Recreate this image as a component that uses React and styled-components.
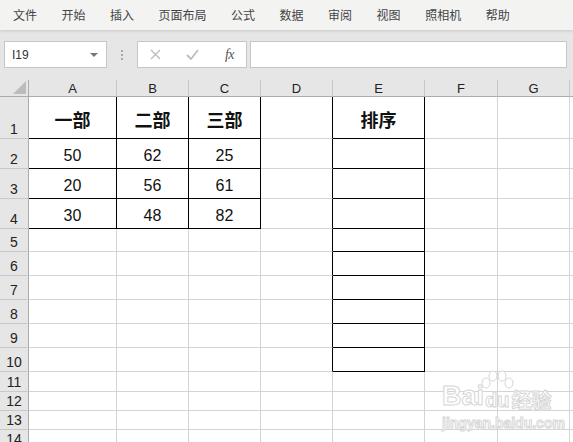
import React from 'react';
import styled, { createGlobalStyle } from 'styled-components';

const GlobalStyle = createGlobalStyle`
  html, body {
    margin: 0;
    padding: 0;
    overflow: hidden;
  }
  body {
    font-family: "Noto Sans CJK SC", "Liberation Sans", sans-serif;
  }
`;

const menus = ['文件', '开始', '插入', '页面布局', '公式', '数据', '审阅', '视图', '照相机', '帮助'];
const columns = [
  { name: 'A', width: 88 },
  { name: 'B', width: 72 },
  { name: 'C', width: 72 },
  { name: 'D', width: 72 },
  { name: 'E', width: 92 },
  { name: 'F', width: 73 },
  { name: 'G', width: 72 },
  { name: '', width: 40 },
];
const rowHeights = [42, 30, 30, 30, 23, 24, 24, 24, 24, 24, 20, 19, 19, 19];

const data = {
  '1-0': { text: '一部', bold: true },
  '1-1': { text: '二部', bold: true },
  '1-2': { text: '三部', bold: true },
  '1-4': { text: '排序', bold: true },
  '2-0': { text: '50' },
  '2-1': { text: '62' },
  '2-2': { text: '25' },
  '3-0': { text: '20' },
  '3-1': { text: '56' },
  '3-2': { text: '61' },
  '4-0': { text: '30' },
  '4-1': { text: '48' },
  '4-2': { text: '82' },
};

const isBoxed = (row, col) => (row >= 1 && row <= 4 && col <= 2) || (col === 4 && row >= 1 && row <= 10);

const Page = styled.div`
  position: relative;
  width: 573px;
  height: 442px;
  background: #e6e6e6;
  display: flex;
  flex-direction: column;
  overflow: hidden;
`;

const MenuBar = styled.div`
  height: 30px;
  flex: none;
  display: flex;
  align-items: center;
  gap: 24.5px;
  padding-left: 13px;
  background: #f3f3f2;
  box-shadow: 0 1px 3px rgba(0, 0, 0, 0.13);
  position: relative;
  z-index: 1;
`;

const MenuItem = styled.span`
  font-size: 12px;
  color: #444;
  line-height: 1;
`;

const FormulaRow = styled.div`
  height: 50px;
  flex: none;
  display: flex;
  align-items: flex-start;
  padding: 11px 0 0 4px;
  box-sizing: border-box;
`;

const Box = styled.div`
  height: 27px;
  box-sizing: border-box;
  background: #fff;
  border: 1px solid #c6c6c6;
  display: flex;
  align-items: center;
`;

const NameBox = styled(Box)`
  width: 103px;
  padding: 0 8px 0 7px;
  justify-content: space-between;
  font-family: "Liberation Sans", sans-serif;
  font-size: 12px;
  color: #333;
`;

const DropArrow = styled.span`
  width: 0;
  height: 0;
  border-left: 4px solid transparent;
  border-right: 4px solid transparent;
  border-top: 4px solid #777;
`;

const Dots = styled.div`
  width: 30px;
  height: 27px;
  display: flex;
  flex-direction: column;
  align-items: center;
  justify-content: center;
  gap: 2px;

  span {
    width: 2px;
    height: 2px;
    background: #a8a8a8;
  }
`;

const FxBox = styled(Box)`
  width: 110px;
  padding: 0 12px 0 12px;
  justify-content: space-between;
`;

const Fx = styled.span`
  font-family: "Liberation Serif", serif;
  font-style: italic;
  font-size: 14px;
  color: #555;
  letter-spacing: -0.5px;
`;

const Input = styled(Box)`
  width: 317px;
  margin-left: 3px;
`;

const Sheet = styled.div`
  flex: 1;
  display: grid;
  grid-template-columns: 29px ${columns.map((c) => c.width + 'px').join(' ')};
  grid-template-rows: 17px ${rowHeights.map((h) => h + 'px').join(' ')};
  background: #fff;
  font-family: "Liberation Sans", sans-serif;
`;

const Corner = styled.div`
  background: #e6e6e6;
  border-right: 1px solid #ababab;
  border-bottom: 1px solid #ababab;
  box-sizing: border-box;
  display: flex;
  align-items: flex-end;
  justify-content: flex-end;
  padding: 0 2px 2px 0;
`;

const ColHeader = styled.div`
  background: #e6e6e6;
  box-sizing: border-box;
  border-bottom: 1px solid #ababab;
  border-right: 1px solid #c8c8c8;
  display: flex;
  align-items: center;
  justify-content: center;
  font-size: 13px;
  color: #222;
  padding-top: 1px;
`;

const RowHeader = styled.div`
  background: #e6e6e6;
  box-sizing: border-box;
  border-right: 1px solid #ababab;
  border-bottom: 1px solid #c8c8c8;
  display: flex;
  align-items: flex-end;
  justify-content: center;
  font-size: 14px;
  line-height: 1;
  color: #222;
  padding-bottom: 2px;
`;

const Cell = styled.div`
  box-sizing: border-box;
  border-right: 1px solid ${(p) => (p.$darkRight ? '#000' : '#d4d4d4')};
  border-bottom: 1px solid ${(p) => (p.$darkBottom ? '#000' : '#d4d4d4')};
  display: flex;
  align-items: flex-end;
  justify-content: center;
  padding-bottom: ${(p) => (p.$bold ? '10px' : '4px')};
  font-family: ${(p) => (p.$bold ? '"Noto Sans CJK SC", sans-serif' : '"Liberation Sans", sans-serif')};
  font-size: ${(p) => (p.$bold ? '18px' : '16px')};
  font-weight: ${(p) => (p.$bold ? 700 : 400)};
  line-height: 1;
  color: #111;
`;

const Watermark = styled.div`
  position: absolute;
  left: 442px;
  top: 383px;
  display: flex;
  flex-direction: column;
  align-items: flex-start;
  color: #fff;
  -webkit-text-stroke: 1px #d6d6d6;
  pointer-events: none;
`;

const MarkRow = styled.div`
  display: flex;
  align-items: flex-end;
  font-family: "Liberation Sans", sans-serif;
  font-weight: 700;
  font-size: 27px;
  line-height: 1;
`;

const MarkDu = styled.span`
  font-size: 20px;
  margin-left: 1px;
`;

const MarkCn = styled.span`
  font-family: "Noto Sans CJK SC", sans-serif;
  font-size: 20px;
  margin-left: 2px;
`;

const MarkUrl = styled.div`
  font-family: "Liberation Sans", sans-serif;
  font-weight: 700;
  font-size: 14px;
  margin-top: 5px;
`;

const Paw = styled.svg`
  position: absolute;
  left: 38px;
  top: -13px;
`;

export default function App() {
  return (
    <>
      <GlobalStyle />
      <Page>
        <MenuBar>
          {menus.map((m) => (
            <MenuItem key={m}>{m}</MenuItem>
          ))}
        </MenuBar>
        <FormulaRow>
          <NameBox>
            <span>I19</span>
            <DropArrow />
          </NameBox>
          <Dots>
            <span />
            <span />
            <span />
          </Dots>
          <FxBox>
            <svg width="11" height="11" viewBox="0 0 11 11">
              <path d="M1 1 L10 10 M10 1 L1 10" stroke="#bdbdbd" strokeWidth="1.4" fill="none" />
            </svg>
            <svg width="13" height="11" viewBox="0 0 13 11">
              <path d="M1 6 L5 10 L12 1" stroke="#bdbdbd" strokeWidth="1.8" fill="none" />
            </svg>
            <Fx>fx</Fx>
          </FxBox>
          <Input />
        </FormulaRow>
        <Sheet>
          <Corner>
            <svg width="13" height="13" viewBox="0 0 13 13">
              <path d="M13 0 L13 13 L0 13 Z" fill="#bcbcbc" />
            </svg>
          </Corner>
          {columns.map((c, i) => (
            <ColHeader key={i}>{c.name}</ColHeader>
          ))}
          {rowHeights.map((h, r) => {
            const row = r + 1;
            return (
              <React.Fragment key={row}>
                <RowHeader>{row}</RowHeader>
                {columns.map((c, col) => {
                  const cell = data[`${row}-${col}`];
                  const boxed = isBoxed(row, col);
                  return (
                    <Cell
                      key={col}
                      $darkRight={boxed || isBoxed(row, col + 1)}
                      $darkBottom={boxed}
                      $bold={cell && cell.bold}
                    >
                      {cell ? cell.text : ''}
                    </Cell>
                  );
                })}
              </React.Fragment>
            );
          })}
        </Sheet>
        <Watermark>
          <Paw width="34" height="30" viewBox="0 0 34 30">
            <g fill="#fff" stroke="#d6d6d6" strokeWidth="1">
              <ellipse cx="6" cy="13" rx="4" ry="5" />
              <ellipse cx="13" cy="6" rx="4" ry="5" />
              <ellipse cx="22" cy="6" rx="4" ry="5" />
              <ellipse cx="29" cy="13" rx="4" ry="5" />
            </g>
          </Paw>
          <MarkRow>
            <span>Bai</span>
            <MarkDu>du</MarkDu>
            <MarkCn>经验</MarkCn>
          </MarkRow>
          <MarkUrl>jingyan.baidu.com</MarkUrl>
        </Watermark>
      </Page>
    </>
  );
}
